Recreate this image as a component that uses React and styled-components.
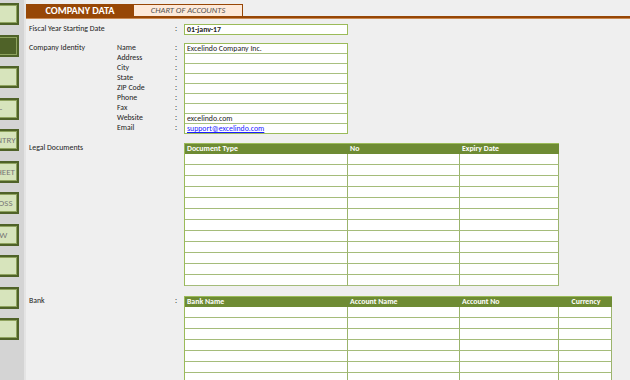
import React from 'react'
import styled, { createGlobalStyle } from 'styled-components'

const GlobalStyle = createGlobalStyle`
  html, body { margin:0; padding:0; background:#efefef; }
  body { font-family: Carlito, "Liberation Sans", Arial, sans-serif; color:#222; }
`

const Page = styled.div`
  display:flex;
  width:630px;
  height:380px;
  overflow:hidden;
  background:#efefef;
`

const Sidebar = styled.div`
  width:26px;
  flex-shrink:0;
  box-sizing:border-box;
  background:#d4d4d4;
  border-right:2px solid #e4e4e4;
  overflow:hidden;
  display:flex;
  flex-direction:column;
  align-items:flex-end;
  gap:9.5px;
  padding:3px 5px 0 0;
`

const NavButton = styled.div`
  flex-shrink:0;
  width:67px;
  height:22px;
  box-sizing:border-box;
  border:2px solid #4f6228;
  box-shadow:inset 0 0 0 1px #8fa35f;
  background:${p => (p.active ? '#4f6228' : '#d7e4bc')};
  color:#777;
  font-size:9px;
  line-height:18px;
  text-align:center;
  white-space:nowrap;
`

const Main = styled.div`
  flex:1;
  display:flex;
  flex-direction:column;
`

const TabBar = styled.div`
  display:flex;
  height:12px;
  margin-top:4px;
  border-bottom:2px solid #974706;
  box-shadow:0 1px 0 #c98a55;
`

const ActiveTab = styled.div`
  width:108px;
  background:#974706;
  color:#fff;
  font-weight:bold;
  font-size:10.3px;
  line-height:14px;
  text-align:center;
`

const Tab = styled.div`
  width:109px;
  box-sizing:border-box;
  background:#fde9d9;
  border-top:1px solid #974706;
  border-right:1px solid #974706;
  color:#555;
  font-style:italic;
  font-size:8.5px;
  line-height:11px;
  text-align:center;
`

const Form = styled.div`
  display:flex;
  flex-direction:column;
  padding-left:3px;
  font-size:7.8px;
`

const Section = styled.div`
  display:grid;
  grid-template-columns:${p => p.cols || '146px 9px auto'};
  grid-auto-rows:${p => p.rowH || 'auto'};
  margin-top:${p => p.gap}px;
  align-items:start;
`

const Label = styled.div`
  line-height:10px;
  white-space:nowrap;
  grid-column:${p => p.col || 'auto'};
  grid-row:${p => p.row || 'auto'};
`

const Colon = styled.div`
  line-height:10px;
  grid-column:${p => p.col || 'auto'};
  grid-row:${p => p.row || 'auto'};
`

const FieldBox = styled.div`
  width:164px;
  box-sizing:border-box;
  border:1px solid #9bbb59;
  background:#fff;
  grid-column:${p => p.col || 'auto'};
  grid-row:${p => p.row || 'auto'};
`

const FieldCell = styled.div`
  height:9px;
  line-height:9px;
  padding-left:2px;
  white-space:nowrap;
  font-weight:${p => (p.bold ? 'bold' : 'normal')};
  & + & { border-top:1px solid #a9c080; }
  a { color:#1a1aff; text-decoration:underline; }
`

const Table = styled.div`
  display:grid;
  grid-template-columns:${p => p.cols};
  border-left:1px solid #9bbb59;
  border-top:1px solid #9bbb59;
  background:#fff;
  width:max-content;
`

const HeadCell = styled.div`
  height:10px;
  box-sizing:border-box;
  background:#6e8b33;
  border-right:1px solid #6e8b33;
  color:#fff;
  font-weight:bold;
  line-height:10px;
  padding-left:2px;
  text-align:${p => p.align || 'left'};
  white-space:nowrap;
`

const BodyCell = styled.div`
  height:11px;
  box-sizing:border-box;
  border-right:1px solid #9bb46c;
  border-bottom:1px solid #a5bc7a;
`

const navItems = ['', '', '', 'LEDGER -', 'JOURNAL ENTRY', 'BALANCE SHEET', 'PROFIT & LOSS', 'CASH FLOW', '', '', '']

const identity = [
  ['Name', 'Excelindo Company Inc.'],
  ['Address', ''],
  ['City', ''],
  ['State', ''],
  ['ZIP Code', ''],
  ['Phone', ''],
  ['Fax', ''],
  ['Website', 'excelindo.com'],
  ['Email', 'link'],
]

const DataTable = ({ cols, headers, rows }) => (
  <Table cols={cols.map(c => c + 'px').join(' ')}>
    {headers.map(h => (
      <HeadCell key={h.text} align={h.align}>{h.text}</HeadCell>
    ))}
    {Array.from({ length: rows * headers.length }).map((_, i) => (
      <BodyCell key={i} />
    ))}
  </Table>
)

const App = () => {
  return (
    <Page>
      <GlobalStyle />
      <Sidebar>
        {navItems.map((t, i) => (
          <NavButton key={i} active={i === 1}>{t}</NavButton>
        ))}
      </Sidebar>
      <Main>
        <TabBar>
          <ActiveTab>COMPANY DATA</ActiveTab>
          <Tab>CHART OF ACCOUNTS</Tab>
        </TabBar>
        <Form>
          <Section gap={6} rowH="10px">
            <Label>Fiscal Year Starting Date</Label>
            <Colon>:</Colon>
            <FieldBox>
              <FieldCell bold>01-janv-17</FieldCell>
            </FieldBox>
          </Section>

          <Section gap={9} rowH="10px" cols="88px 58px 9px auto">
            <Label col={1} row={1}>Company Identity</Label>
            {identity.map(([name], i) => (
              <React.Fragment key={name}>
                <Label col={2} row={i + 1}>{name}</Label>
                <Colon col={3} row={i + 1}>:</Colon>
              </React.Fragment>
            ))}
            <FieldBox col={4} row="1 / span 9">
              {identity.map(([name, value]) => (
                <FieldCell key={name}>
                  {value === 'link' ? <a href="#">support@excelindo.com</a> : value}
                </FieldCell>
              ))}
            </FieldBox>
          </Section>

          <Section gap={10} cols="155px auto">
            <Label>Legal Documents</Label>
            <DataTable
              cols={[163, 112, 99]}
              headers={[{ text: 'Document Type' }, { text: 'No' }, { text: 'Expiry Date' }]}
              rows={12}
            />
          </Section>

          <Section gap={10}>
            <Label>Bank</Label>
            <Colon>:</Colon>
            <DataTable
              cols={[163, 112, 99, 53]}
              headers={[
                { text: 'Bank Name' },
                { text: 'Account Name' },
                { text: 'Account No' },
                { text: 'Currency', align: 'center' },
              ]}
              rows={8}
            />
          </Section>
        </Form>
      </Main>
    </Page>
  )
}

export default App
